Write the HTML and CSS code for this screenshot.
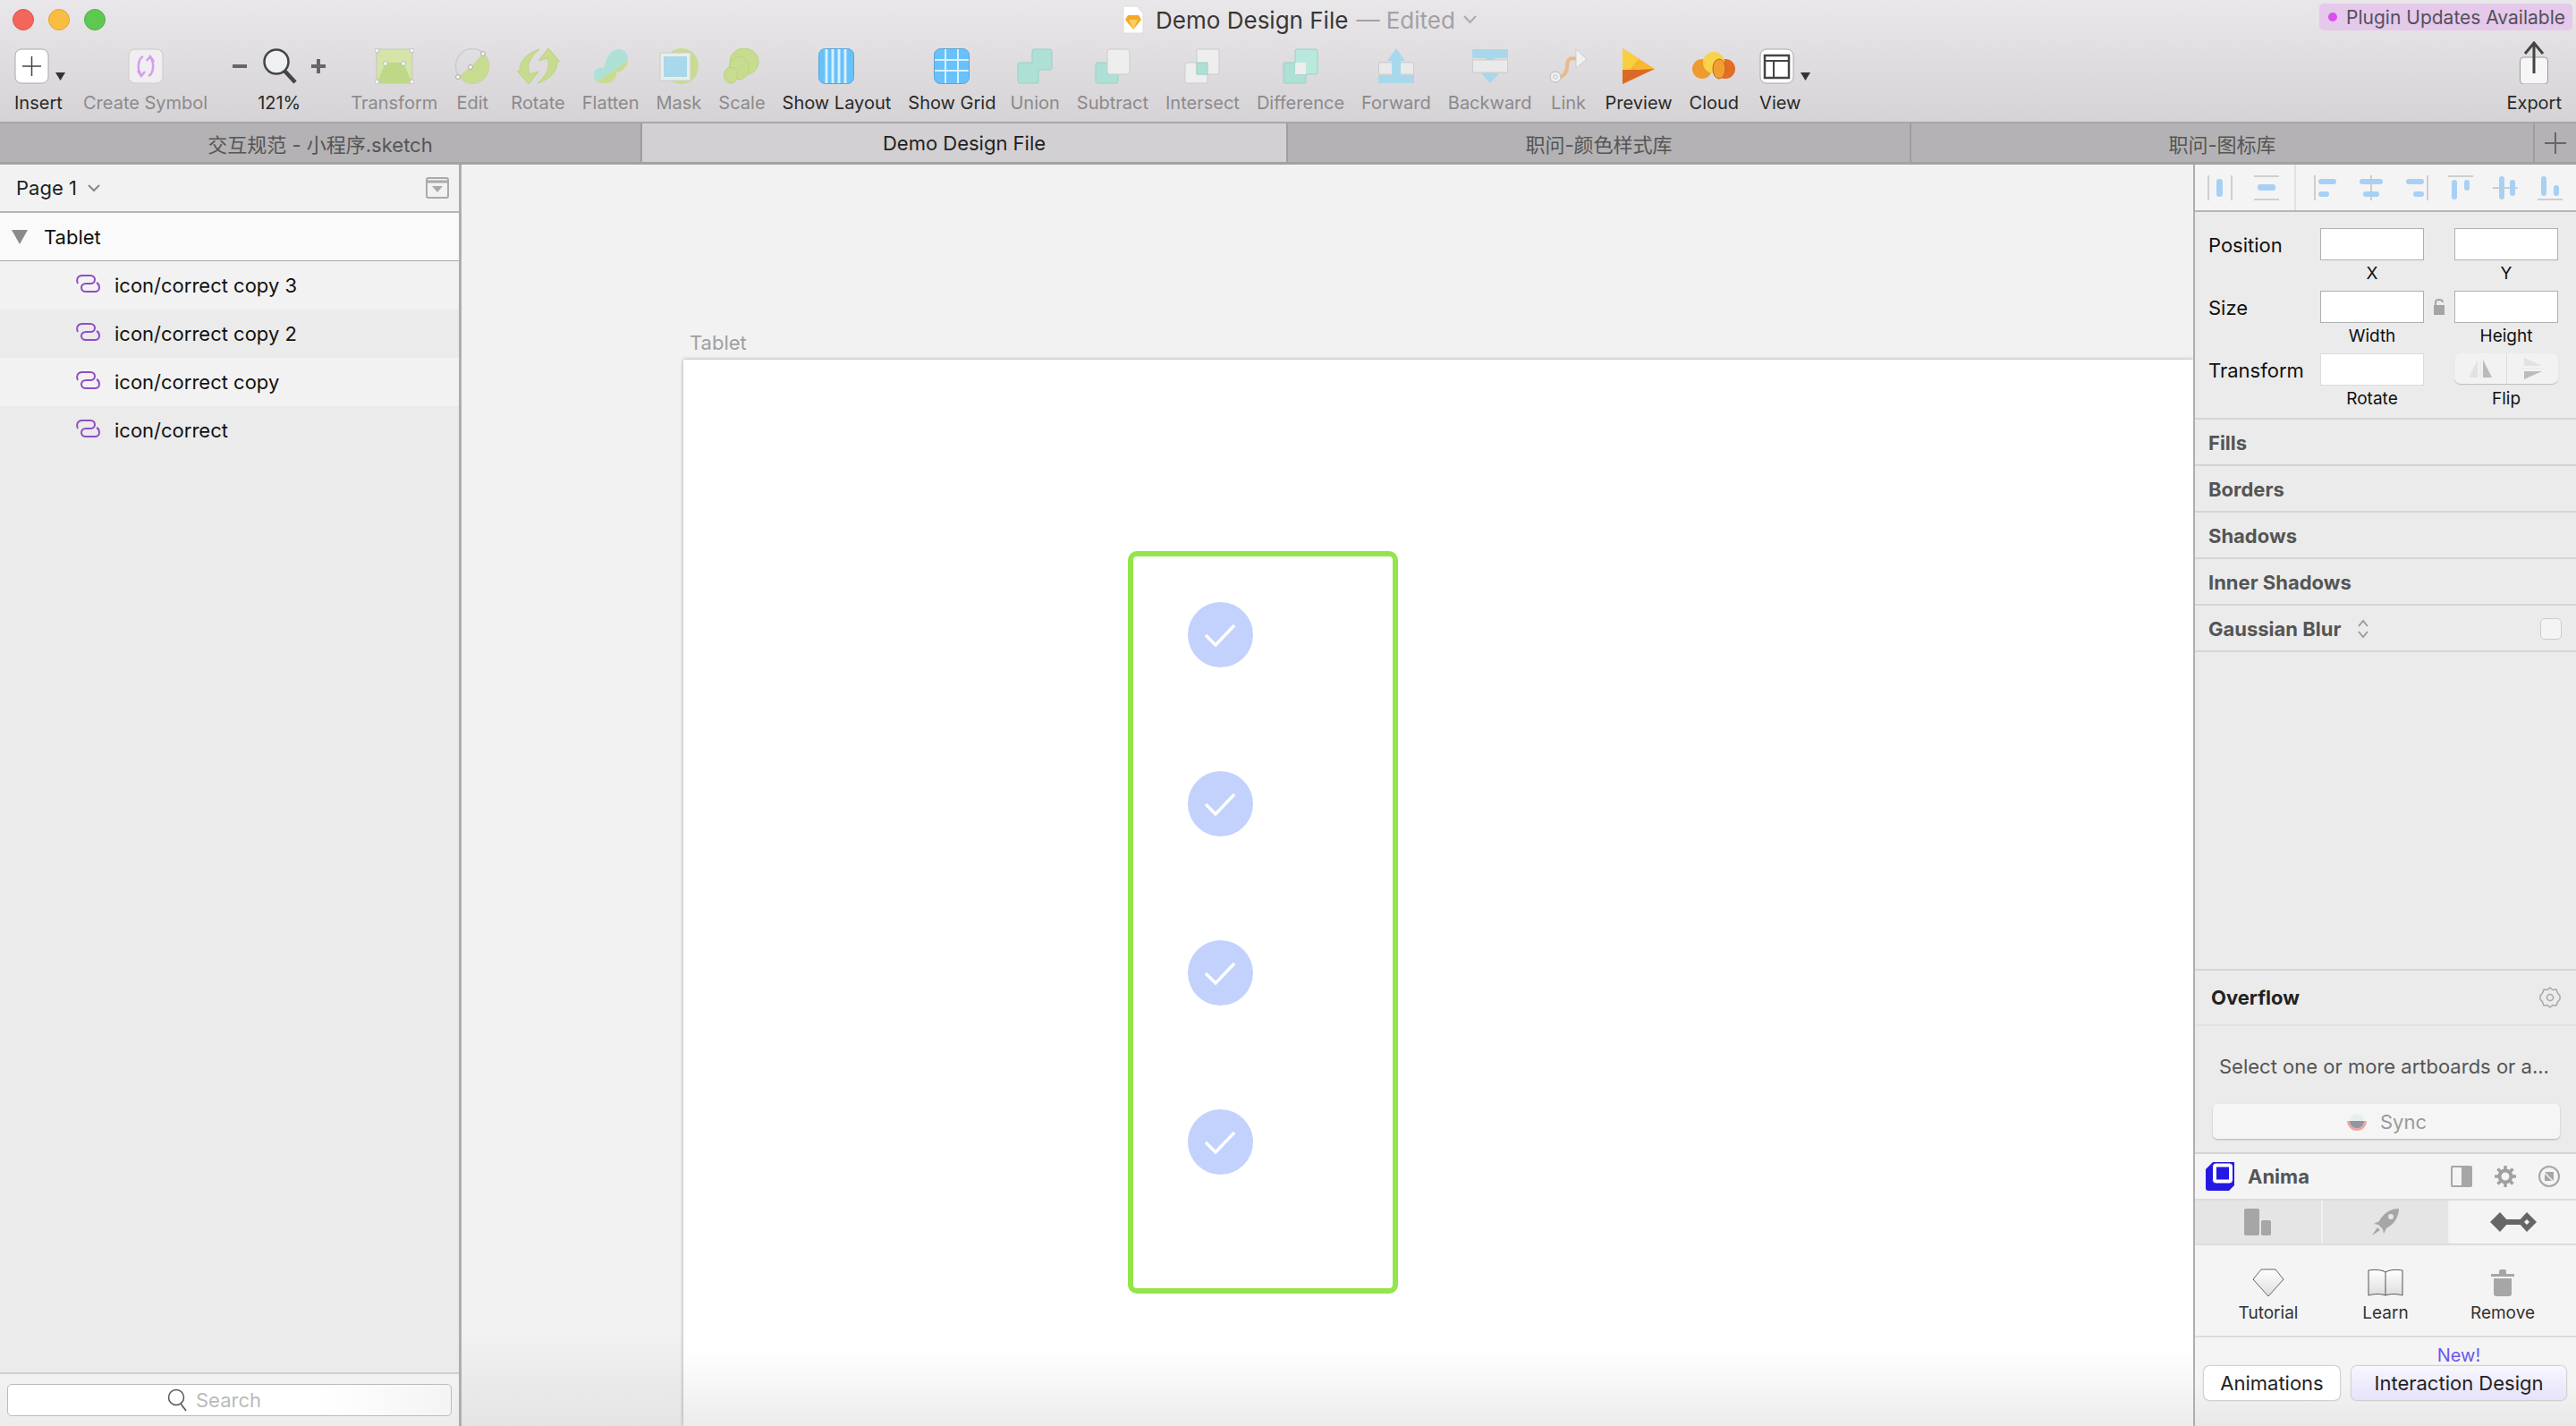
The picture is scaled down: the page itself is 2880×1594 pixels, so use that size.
FILE: index.html
```html
<!DOCTYPE html>
<html lang="zh-CN">
<head>
    <meta charset="UTF-8">
    <meta name="viewport" content="width=device-width, initial-scale=1.0">
    <title>Demo Design File</title>
    <link rel="stylesheet" href="styles.css">
</head>
<body>
    <svg class="defs" width="0" height="0">
        <symbol id="link" viewBox="0 0 28 20">
            <path d="M3 10C1 7 2 1 8 1H17C20 1 22 3 22 5.500S20 10 17 10H12" fill="none" stroke="#8e4ec6" stroke-width="2"/>
            <path d="M12 10C9 10 7 12 7 14.500S9 19 12 19H22C25 19 27 17 27 14.500C27 12 26 10 24 9" fill="none" stroke="#8e4ec6" stroke-width="2"/>
        </symbol>
        <symbol id="tick" viewBox="0 0 73 73">
            <circle cx="36.500" cy="36.500" r="36.500" fill="#c2d2fd"/>
            <path d="M20 37L31 48L52 26" fill="none" stroke="#fff" stroke-width="3.500"/>
        </symbol>
    </svg>

    <!-- barra de titulo -->
    <header class="toolbar">
        <div class="titlebar">
            <div class="lights">
                <span class="light red"></span>
                <span class="light yellow"></span>
                <span class="light green"></span>
            </div>
            <div class="doc-title">
                <svg width="24" height="32" viewBox="0 0 24 32"><path d="M1 1H16L23 9V31H1Z" fill="#fff" stroke="#ddd"/><path d="M6 11H18L21 16L12 27L3 16Z" fill="#f7a823"/><path d="M7 16H17L12 27Z" fill="#fbcd62"/></svg>
                <span class="doc-name">Demo Design File</span>
                <span class="doc-state">— Edited</span>
                <svg width="15" height="10" viewBox="0 0 15 10"><path d="M1 1L7.500 8L14 1" fill="none" stroke="#aaa" stroke-width="2"/></svg>
            </div>
            <div class="plugin-badge"><span class="plugin-dot"></span>Plugin Updates Available</div>
        </div>

        <div class="tools">
            <div class="tool tool-insert">
                <div class="tool-icon">
                    <svg width="58" height="40" viewBox="0 0 58 40"><rect x="1" y="1" width="37" height="38" rx="7" fill="#fff" stroke="#aaa"/><path d="M19.500 9V31M9 20H30" stroke="#444" stroke-width="1.500"/><path d="M46 27H57L51.500 36Z" fill="#333"/></svg>
                </div>
                <span class="tool-label">Insert</span>
            </div>
            <div class="tool off">
                <div class="tool-icon">
                    <svg width="40" height="40" viewBox="0 0 40 40"><rect x="1" y="1" width="38" height="38" rx="7" fill="#f0eef0" stroke="#ccc"/><path d="M17 9C11 12 10 24 15 30M11 25L15 31L19 26M23 31C29 28 30 16 25 10M29 15L25 9L21 14" fill="none" stroke="#d59cee" stroke-width="2.500"/></svg>
                </div>
                <span class="tool-label">Create Symbol</span>
            </div>
            <div class="tool tool-zoom">
                <div class="tool-icon">
                    <svg width="106" height="40" viewBox="0 0 106 40"><path d="M1 20H17" stroke="#666" stroke-width="4"/><circle cx="50" cy="15" r="13.500" fill="#eef0f4" stroke="#444" stroke-width="2.500"/><path d="M59 25L71 38" stroke="#444" stroke-width="4.500"/><path d="M89 20H105M97 12V28" stroke="#666" stroke-width="4"/></svg>
                </div>
                <span class="tool-label on">121%</span>
            </div>
            <div class="tool off tool-transform">
                <div class="tool-icon">
                    <svg width="44" height="40" viewBox="0 0 44 40"><rect x="2" y="1" width="40" height="38" fill="#d5e4a9" stroke="#c8c8b8"/><path d="M12 16H32L42 39H2Z" fill="#bfd888"/><g fill="#f4f4f4" stroke="#bbb"><circle cx="2.500" cy="2.500" r="2.500"/><circle cx="41.500" cy="2.500" r="2.500"/><circle cx="2.500" cy="37.500" r="2.500"/><circle cx="41.500" cy="37.500" r="2.500"/><circle cx="12" cy="17" r="2.500"/><circle cx="32" cy="17" r="2.500"/></g></svg>
                </div>
                <span class="tool-label">Transform</span>
            </div>
            <div class="tool off">
                <div class="tool-icon">
                    <svg width="40" height="40" viewBox="0 0 40 40"><ellipse cx="20" cy="20" rx="18.500" ry="19.500" fill="none" stroke="#ccc" stroke-width="1.500"/><path d="M32 6C37 10 39 15 39 20C39 32 30 39 20 39C14 39 10 37 4 32L18 21Z" fill="#c8dc90"/><g fill="#f4f4f4" stroke="#aaa"><circle cx="32" cy="6" r="2.500"/><circle cx="18" cy="21" r="2.500"/><circle cx="4" cy="32" r="2.500"/></g></svg>
                </div>
                <span class="tool-label">Edit</span>
            </div>
            <div class="tool off tool-rotate">
                <div class="tool-icon">
                    <svg width="48" height="40" viewBox="0 0 48 40"><path id="rotate-half" d="M25 1C12 5 2 14 3 27L0 25L13 40L24 26L14 29C10 20 14 10 25 1Z" fill="#c8dc90" stroke="#bcd27e"/><path d="M25 1C12 5 2 14 3 27L0 25L13 40L24 26L14 29C10 20 14 10 25 1Z" fill="#c8dc90" stroke="#bcd27e" transform="rotate(180 24 20)"/></svg>
                </div>
                <span class="tool-label">Rotate</span>
            </div>
            <div class="tool off">
                <div class="tool-icon">
                    <svg width="40" height="40" viewBox="0 0 40 40"><path d="M12 22C15 10 20 1 29 1C36 1 40 8 39 14L4 38C1 34 0 28 2 25C4 22 8 21 12 22Z" fill="#aee0d6"/><path d="M39 14C38 22 32 26 26 27C27 33 22 39 15 39C11 39 7 39 4 38Z" fill="#c8dc90"/></svg>
                </div>
                <span class="tool-label">Flatten</span>
            </div>
            <div class="tool off">
                <div class="tool-icon">
                    <svg width="44" height="40" viewBox="0 0 44 40"><ellipse cx="25" cy="20" rx="19" ry="20" fill="#c8dc90"/><rect x="1" y="5" width="34" height="31" fill="#e8efe8" stroke="#ccc"/><rect x="5" y="9" width="26" height="23" fill="#a8d8ec"/></svg>
                </div>
                <span class="tool-label">Mask</span>
            </div>
            <div class="tool off">
                <div class="tool-icon">
                    <svg width="40" height="40" viewBox="0 0 40 40"><g fill="#c8dc90" stroke="#bcd27e"><ellipse cx="23" cy="15" rx="16" ry="15"/><ellipse cx="17" cy="22" rx="11" ry="13"/><ellipse cx="8" cy="30" rx="7.500" ry="9"/></g></svg>
                </div>
                <span class="tool-label">Scale</span>
            </div>
            <div class="tool">
                <div class="tool-icon">
                    <svg width="40" height="40" viewBox="0 0 40 40"><rect x="0.500" y="0.500" width="39" height="39" rx="7" fill="#67c1fb" stroke="#5aa5d8"/><path d="M9 1V39M16 1V39M23 1V39M30 1V39" stroke="#d8f0ff" stroke-width="3"/></svg>
                </div>
                <span class="tool-label">Show Layout</span>
            </div>
            <div class="tool">
                <div class="tool-icon">
                    <svg width="40" height="40" viewBox="0 0 40 40"><rect x="0.500" y="0.500" width="39" height="39" rx="7" fill="#67c1fb" stroke="#5aa5d8"/><path d="M13 1V39M27 1V39M1 13H39M1 25H39" stroke="#d8f0ff" stroke-width="2"/></svg>
                </div>
                <span class="tool-label">Show Grid</span>
            </div>
            <div class="tool off tool-union">
                <div class="tool-icon">
                    <svg width="40" height="40" viewBox="0 0 40 40"><path d="M17 3Q17 1 19 1H37Q39 1 39 3V22Q39 24 37 24H24V37Q24 39 22 39H3Q1 39 1 37V18Q1 16 3 16H17Z" fill="#aee0d6" stroke="#9bd0c4"/></svg>
                </div>
                <span class="tool-label">Union</span>
            </div>
            <div class="tool off">
                <div class="tool-icon">
                    <svg width="40" height="40" viewBox="0 0 40 40"><rect x="1" y="16" width="25" height="23" rx="2" fill="#aee0d6" stroke="#9bd0c4"/><rect x="14" y="1" width="25" height="28" rx="3" fill="#eeeeee" stroke="#ccc"/></svg>
                </div>
                <span class="tool-label">Subtract</span>
            </div>
            <div class="tool off">
                <div class="tool-icon">
                    <svg width="40" height="40" viewBox="0 0 40 40"><rect x="1" y="16" width="25" height="23" rx="2" fill="#eee" stroke="#ccc"/><rect x="14" y="1" width="25" height="28" rx="2" fill="#eee" stroke="#ccc"/><rect x="14" y="16" width="12" height="13" fill="#aee0d6" stroke="#9bd0c4"/></svg>
                </div>
                <span class="tool-label">Intersect</span>
            </div>
            <div class="tool off">
                <div class="tool-icon">
                    <svg width="40" height="40" viewBox="0 0 40 40"><rect x="1" y="16" width="25" height="23" rx="2" fill="#aee0d6" stroke="#9bd0c4"/><rect x="14" y="1" width="25" height="28" rx="2" fill="#b9e9dc" stroke="#9bd0c4"/><rect x="14" y="16" width="12" height="13" fill="#eee"/></svg>
                </div>
                <span class="tool-label">Difference</span>
            </div>
            <div class="tool off">
                <div class="tool-icon">
                    <svg width="40" height="40" viewBox="0 0 40 40"><path d="M20 0L30 14H25V30H40V39H0V30H15V14H10Z" fill="#a8d8ec"/><rect x="0.500" y="16" width="39" height="13" fill="#eaeaea" stroke="#ccc"/><rect x="15" y="14" width="10" height="16" fill="#a8d8ec"/></svg>
                </div>
                <span class="tool-label">Forward</span>
            </div>
            <div class="tool off">
                <div class="tool-icon">
                    <svg width="40" height="40" viewBox="0 0 40 40"><path d="M0 1H40V11H25V28H30L20 39L10 28H15V11H0Z" fill="#a8d8ec"/><rect x="0.500" y="13" width="39" height="14" fill="#eaeaea" stroke="#ccc"/></svg>
                </div>
                <span class="tool-label">Backward</span>
            </div>
            <div class="tool off">
                <div class="tool-icon">
                    <svg width="44" height="40" viewBox="0 0 44 40"><path d="M8 33C16 32 20 28 20 20C20 12 24 10 30 12" fill="none" stroke="#eab98c" stroke-width="4"/><path d="M30 1L42 12L30 22Z" fill="#f2f2f2" stroke="#ccc"/><circle cx="7" cy="32" r="6" fill="#eee" stroke="#bbb"/><circle cx="7" cy="32" r="2" fill="#fff" stroke="#bbb"/></svg>
                </div>
                <span class="tool-label">Link</span>
            </div>
            <div class="tool">
                <div class="tool-icon">
                    <svg width="36" height="40" viewBox="0 0 36 40"><path d="M0 0L36 23L0 40Z" fill="#f7b733"/><path d="M0 0L18 12L8 24H0Z" fill="#f8cf3f"/><path d="M0 24H18L36 23L0 40Z" fill="#dc6a26"/></svg>
                </div>
                <span class="tool-label">Preview</span>
            </div>
            <div class="tool">
                <div class="tool-icon">
                    <svg width="50" height="40" viewBox="0 0 50 40"><circle cx="12" cy="23" r="11" fill="#ed9a2e"/><circle cx="38" cy="23" r="11" fill="#e36d24"/><circle cx="25" cy="16" r="12" fill="#f8d24a"/><ellipse cx="31" cy="23" rx="7" ry="11" fill="#f0a030" stroke="#c86020"/></svg>
                </div>
                <span class="tool-label">Cloud</span>
            </div>
            <div class="tool tool-view">
                <div class="tool-icon">
                    <svg width="58" height="40" viewBox="0 0 58 40"><rect x="1" y="1" width="37" height="38" rx="7" fill="#fff" stroke="#aaa"/><rect x="6" y="8" width="27" height="25" fill="none" stroke="#444" stroke-width="2.500"/><path d="M6 14H33M16 14V33" stroke="#444" stroke-width="2"/><path d="M46 27H57L51.500 36Z" fill="#333"/></svg>
                </div>
                <span class="tool-label">View</span>
            </div>
            <div class="tool tool-export">
                <div class="tool-icon">
                    <svg width="34" height="48" viewBox="0 0 34 48"><rect x="1.500" y="18" width="31" height="30" rx="4" fill="#f6f6f6" stroke="#999"/><path d="M17 2V36M7 14L17 2L27 14" fill="none" stroke="#444" stroke-width="3"/></svg>
                </div>
                <span class="tool-label">Export</span>
            </div>
        </div>
    </header>

    <!-- abas -->
    <nav class="tabs">
        <div class="tab tab-doc">交互规范 - 小程序.sketch</div>
        <div class="tab tab-active">Demo Design File</div>
        <div class="tab tab-color">职问-颜色样式库</div>
        <div class="tab tab-icons">职问-图标库</div>
        <div class="tab tab-add">
            <svg width="24" height="24" viewBox="0 0 24 24"><path d="M12 0V24M0 12H24" stroke="#666" stroke-width="2"/></svg>
        </div>
    </nav>

    <main class="workspace">
        <!-- lista de camadas -->
        <aside class="layers">
            <div class="page-bar">
                <span class="page-name">Page 1</span>
                <svg width="14" height="9" viewBox="0 0 14 9"><path d="M1 1L7 7L13 1" fill="none" stroke="#888" stroke-width="2"/></svg>
                <svg class="page-toggle" width="26" height="24" viewBox="0 0 26 24"><rect x="1" y="1" width="24" height="22" rx="2" fill="none" stroke="#aaa" stroke-width="2"/><path d="M1 5H25" stroke="#aaa" stroke-width="3"/><path d="M7 10H19L13 17Z" fill="#aaa"/></svg>
            </div>
            <div class="artboard-row">
                <svg width="18" height="16" viewBox="0 0 18 16"><path d="M0 0H18L9 16Z" fill="#8b8b8b"/></svg>
                <span>Tablet</span>
            </div>
            <div class="layer-row"><svg class="layer-icon"><use href="#link"/></svg>icon/correct copy 3</div>
            <div class="layer-row alt"><svg class="layer-icon"><use href="#link"/></svg>icon/correct copy 2</div>
            <div class="layer-row"><svg class="layer-icon"><use href="#link"/></svg>icon/correct copy</div>
            <div class="layer-row alt"><svg class="layer-icon"><use href="#link"/></svg>icon/correct</div>
            <div class="layers-fill"></div>
            <div class="search-bar">
                <div class="search-box">
                    <svg width="22" height="26" viewBox="0 0 22 26"><circle cx="10" cy="10" r="8.500" fill="none" stroke="#555" stroke-width="1.500"/><path d="M15 17L21 25" stroke="#555" stroke-width="1.500"/></svg>
                    <span>Search</span>
                </div>
            </div>
        </aside>

        <!-- area de desenho -->
        <section class="canvas">
            <div class="board-title">Tablet</div>
            <div class="board">
                <div class="frame">
                    <svg class="tick"><use href="#tick"/></svg>
                    <svg class="tick"><use href="#tick"/></svg>
                    <svg class="tick"><use href="#tick"/></svg>
                    <svg class="tick"><use href="#tick"/></svg>
                </div>
            </div>
        </section>

        <!-- inspetor -->
        <aside class="inspector">
            <div class="align-bar">
                <div class="align-group first">
                    <svg width="28" height="28" viewBox="0 0 28 28"><path d="M1 0V28M27 0V28" stroke="#c2c2c2" stroke-width="1.500"/><rect x="10" y="4" width="7" height="20" rx="3" fill="#a8d0f5"/></svg>
                    <svg width="28" height="28" viewBox="0 0 28 28"><path d="M0 1H28M0 27H28" stroke="#c2c2c2" stroke-width="1.500"/><rect x="4" y="10" width="20" height="7" rx="3" fill="#a8d0f5"/></svg>
                </div>
                <div class="align-group">
                    <svg width="28" height="28" viewBox="0 0 28 28"><path d="M1 0V28" stroke="#c2c2c2" stroke-width="1.500"/><rect x="5" y="4" width="20" height="6" rx="3" fill="#a8d0f5"/><rect x="5" y="18" width="12" height="6" rx="3" fill="#a8d0f5"/></svg>
                    <svg width="28" height="28" viewBox="0 0 28 28"><path d="M14 0V28" stroke="#c2c2c2" stroke-width="1.500"/><rect x="1" y="4" width="26" height="6" rx="3" fill="#a8d0f5"/><rect x="5" y="18" width="18" height="6" rx="3" fill="#a8d0f5"/></svg>
                    <svg width="28" height="28" viewBox="0 0 28 28"><path d="M27 0V28" stroke="#c2c2c2" stroke-width="1.500"/><rect x="3" y="4" width="20" height="6" rx="3" fill="#a8d0f5"/><rect x="11" y="18" width="12" height="6" rx="3" fill="#a8d0f5"/></svg>
                    <svg width="28" height="28" viewBox="0 0 28 28"><path d="M0 1H28" stroke="#c2c2c2" stroke-width="1.500"/><rect x="4" y="5" width="6" height="22" rx="3" fill="#a8d0f5"/><rect x="18" y="5" width="6" height="12" rx="3" fill="#a8d0f5"/></svg>
                    <svg width="28" height="28" viewBox="0 0 28 28"><path d="M0 14H28" stroke="#c2c2c2" stroke-width="1.500"/><rect x="7" y="1" width="6" height="26" rx="3" fill="#a8d0f5"/><rect x="19" y="5" width="6" height="18" rx="3" fill="#a8d0f5"/></svg>
                    <svg width="28" height="28" viewBox="0 0 28 28"><path d="M0 27H28" stroke="#c2c2c2" stroke-width="1.500"/><rect x="4" y="1" width="6" height="22" rx="3" fill="#a8d0f5"/><rect x="18" y="11" width="6" height="12" rx="3" fill="#a8d0f5"/></svg>
                </div>
            </div>

            <div class="geometry">
                <div class="geo-row">
                    <span class="geo-name">Position</span>
                    <div class="geo-field"><div class="geo-input"></div><span class="geo-cap">X</span></div>
                    <span class="geo-lock"></span>
                    <div class="geo-field"><div class="geo-input"></div><span class="geo-cap">Y</span></div>
                </div>
                <div class="geo-row">
                    <span class="geo-name">Size</span>
                    <div class="geo-field"><div class="geo-input"></div><span class="geo-cap">Width</span></div>
                    <span class="geo-lock">
                        <svg width="14" height="18" viewBox="0 0 14 18"><rect x="1" y="7" width="12" height="11" fill="#a4a4a4"/><path d="M3 7V4C3 2 5 1 7 1S11 2 11 4" fill="none" stroke="#a4a4a4" stroke-width="2"/></svg>
                    </span>
                    <div class="geo-field"><div class="geo-input"></div><span class="geo-cap">Height</span></div>
                </div>
                <div class="geo-row">
                    <span class="geo-name">Transform</span>
                    <div class="geo-field"><div class="geo-input faint"></div><span class="geo-cap">Rotate</span></div>
                    <span class="geo-lock"></span>
                    <div class="geo-field">
                        <div class="flip">
                            <div class="flip-half"><svg width="28" height="22" viewBox="0 0 28 22"><path d="M11 1V21H1Z" fill="#e2e2e2"/><path d="M14 0V22" stroke="#e8e8e8"/><path d="M17 1L27 21H17Z" fill="#bbb"/></svg></div>
                            <div class="flip-half"><svg width="26" height="26" viewBox="0 0 26 26"><path d="M4 1L24 10H4Z" fill="#e2e2e2"/><path d="M0 13H26" stroke="#e8e8e8"/><path d="M4 16H24L4 25Z" fill="#bbb"/></svg></div>
                        </div>
                        <span class="geo-cap flip-cap">Flip</span>
                    </div>
                </div>
            </div>

            <div class="section">Fills</div>
            <div class="section">Borders</div>
            <div class="section">Shadows</div>
            <div class="section">Inner Shadows</div>
            <div class="section">
                <span>Gaussian Blur</span>
                <svg class="blur-arrows" width="14" height="22" viewBox="0 0 14 22"><path d="M2 8L7 2L12 8M2 14L7 20L12 14" fill="none" stroke="#999" stroke-width="1.800"/></svg>
                <span class="blur-check"></span>
            </div>
            <div class="inspector-fill"></div>

            <div class="overflow-head">
                <span>Overflow</span>
                <svg width="24" height="24" viewBox="0 0 24 24"><path d="M12 1L15 3.500L19 3L20.500 7L23 10L23 14L20.500 17L19 21L15 20.500L12 23L9 20.500L5 21L3.500 17L1 14V10L3.500 7L5 3L9 3.500Z" fill="none" stroke="#a8a8a8" stroke-width="1.500"/><circle cx="12" cy="12" r="3.500" fill="none" stroke="#a8a8a8" stroke-width="1.500"/></svg>
            </div>
            <div class="overflow-body">
                <p class="overflow-text">Select one or more artboards or a...</p>
                <div class="sync-btn">
                    <svg width="24" height="20" viewBox="0 0 24 20"><path d="M1 9H23A11 11 0 0 1 1 9Z" fill="#eea8a0"/><path d="M4 9H20A8 8 0 0 1 4 9Z" fill="#8f98a2"/><path d="M4 9A8 8 0 0 1 20 9Z" fill="#e8eeee"/></svg>
                    <span>Sync</span>
                </div>
            </div>

            <div class="anima-head">
                <svg width="32" height="32" viewBox="0 0 32 32"><path d="M8 0H32V26L26 32H3Q0 32 0 29V8Z" fill="#2419e2"/><rect x="7.500" y="1" width="23" height="23" rx="4" fill="#fff" stroke="#2419e2"/><rect x="12" y="5.500" width="14" height="14" fill="#2419e2"/></svg>
                <span class="anima-name">Anima</span>
                <svg class="anima-panel" width="24" height="24" viewBox="0 0 24 24"><rect x="1" y="1" width="22" height="22" rx="1" fill="none" stroke="#a6a6a6" stroke-width="2"/><rect x="12" y="1" width="11" height="22" fill="#a6a6a6"/></svg>
                <svg width="24" height="24" viewBox="0 0 24 24"><circle cx="12" cy="12" r="6.500" fill="none" stroke="#a0a0a0" stroke-width="4"/><path d="M12 0V5M12 19V24M0 12H5M19 12H24M3.500 3.500L7 7M17 17L20.500 20.500M3.500 20.500L7 17M17 7L20.500 3.500" stroke="#a0a0a0" stroke-width="3.500"/></svg>
                <svg width="24" height="24" viewBox="0 0 24 24"><circle cx="12" cy="12" r="11" fill="none" stroke="#a6a6a6" stroke-width="2"/><path d="M7 7H17V17Z" fill="#a6a6a6"/><path d="M7 9L15 17H7Z" fill="#a6a6a6"/></svg>
            </div>
            <div class="anima-tabs">
                <div class="anima-tab">
                    <svg width="30" height="30" viewBox="0 0 30 30"><rect x="0" y="0" width="17" height="30" rx="2" fill="#a6a6a6"/><rect x="19" y="13" width="11" height="17" rx="2" fill="#a6a6a6"/></svg>
                </div>
                <div class="anima-tab">
                    <svg width="30" height="30" viewBox="0 0 30 30"><path d="M30 0C20 0 12 6 8 14L2 17L7 18L12 23L13 28L16 22C24 18 30 10 30 0Z" fill="#a6a6a6"/><path d="M6 21L9 24L0 30Z" fill="#a6a6a6"/><circle cx="21" cy="9" r="3" fill="#e5e5e5"/></svg>
                </div>
                <div class="anima-tab active">
                    <svg width="54" height="24" viewBox="0 0 54 24"><path d="M12 1L22 12L12 23L1 12Z" fill="#666"/><path d="M42 1L53 12L42 23L32 12Z" fill="#666"/><rect x="18" y="9" width="18" height="6" fill="#666"/><path d="M42 9L45 12L42 15L39 12Z" fill="#f4f4f4"/></svg>
                </div>
            </div>
            <div class="anima-actions">
                <div class="anima-action">
                    <svg width="36" height="32" viewBox="0 0 36 32"><defs><linearGradient id="soft" x1="0" y1="0" x2="0" y2="1"><stop offset="0" stop-color="#fff"/><stop offset="1" stop-color="#ddd"/></linearGradient></defs><path d="M10 1H26L35 12L18 31L1 12Z" fill="url(#soft)" stroke="#666"/></svg>
                    <span>Tutorial</span>
                </div>
                <div class="anima-action">
                    <svg width="40" height="32" viewBox="0 0 40 32"><path d="M1 2C8 1 15 1 20 4C25 1 32 1 39 2V30C32 28 25 28 20 30C15 28 8 28 1 30Z" fill="url(#soft)" stroke="#555"/><path d="M20 4V30" stroke="#555"/></svg>
                    <span>Learn</span>
                </div>
                <div class="anima-action">
                    <svg width="28" height="32" viewBox="0 0 28 32"><path d="M1 6H27V9H1Z" fill="#a6a6a6"/><path d="M10 6V3Q10 1 12 1H16Q18 1 18 3V6Z" fill="#a6a6a6"/><path d="M4 11H24V28Q24 31 21 31H7Q4 31 4 28Z" fill="#a6a6a6"/></svg>
                    <span>Remove</span>
                </div>
            </div>
            <div class="anima-foot">
                <div class="new-tag">New!</div>
                <div class="foot-btns">
                    <div class="foot-btn">Animations</div>
                    <div class="foot-btn wide">Interaction Design</div>
                </div>
            </div>
        </aside>
    </main>
</body>
</html>
```

FILE: styles.css
```css
/* Geral */
* {
    box-sizing: border-box;
}

html, body {
    height: 100%;
}

body {
    margin: 0;
    display: flex;
    flex-direction: column;
    height: 1594px;
    overflow: hidden;
    font-family: Inter, "Noto Sans CJK SC", sans-serif;
    font-size: 22px;
    color: #222;
    background-color: #f2f2f2;
}

svg {
    display: block;
    flex: none;
}

.defs {
    position: absolute;
}

/* Barra de titulo */
.toolbar {
    height: 138px;
    flex: none;
    background: linear-gradient(#e9e7e9, #d5d3d5);
    border-bottom: 2px solid #a8a6a8;
}

.titlebar {
    position: relative;
    display: flex;
    justify-content: center;
    height: 44px;
}

.lights {
    position: absolute;
    left: 14px;
    top: 10px;
    display: flex;
    gap: 16px;
}

.light {
    width: 24px;
    height: 24px;
    border-radius: 50%;
}

.red { background-color: #f3665c; border: 1px solid #e0544a; }
.yellow { background-color: #f9bd42; border: 1px solid #e3a530; }
.green { background-color: #5fc853; border: 1px solid #4db143; }

.doc-title {
    display: flex;
    align-items: center;
    gap: 9px;
    margin-left: 26px;
    font-size: 26px;
    height: 44px;
}

.doc-name {
    color: #3a3638;
    margin-left: 4px;
}

.doc-state {
    color: #a3a1a3;
}

.plugin-badge {
    position: absolute;
    right: 4px;
    top: 4px;
    display: flex;
    align-items: center;
    gap: 10px;
    height: 30px;
    padding: 0 8px 0 10px;
    border-radius: 5px;
    background-color: #e4c9ea;
    color: #55505a;
    font-size: 21px;
}

.plugin-dot {
    width: 10px;
    height: 10px;
    border-radius: 50%;
    background-color: #d94ff0;
}

.tools {
    display: flex;
    align-items: flex-start;
    gap: 19px;
    padding: 10px 16px 0;
}

.tool {
    display: flex;
    flex-direction: column;
    align-items: center;
}

.tool-icon {
    height: 40px;
    display: flex;
    align-items: flex-end;
}

.tool-label {
    margin-top: 9px;
    font-size: 20px;
    line-height: 24px;
    white-space: nowrap;
    color: #2a2a2a;
}

.off .tool-label {
    color: #8c8a8c;
}

.tool-insert {
    width: 58px;
    align-items: flex-start;
}

.tool-zoom {
    margin-left: 8px;
}

.tool-transform {
    margin-left: 8px;
}

.tool-rotate {
    margin-left: 4px;
}

.tool-union {
    margin-left: -3px;
}

.tool-view {
    margin-left: 4px;
    align-items: flex-start;
}

.tool-export {
    margin-left: auto;
}

/* Abas */
.tabs {
    display: flex;
    height: 46px;
    flex: none;
    background-color: #b4b2b4;
    border-bottom: 3px solid #a3a1a3;
    color: #555;
}

.tab {
    display: flex;
    align-items: center;
    justify-content: center;
    border-right: 2px solid #9f9d9f;
    font-size: 22px;
}

.tab-doc { width: 718px; }
.tab-active { width: 722px; background-color: #d2d0d2; color: #222; }
.tab-color { width: 697px; }
.tab-icons { width: 697px; }
.tab-add { flex: 1; border-right: none; }

/* Camadas */
.workspace {
    display: flex;
    flex: 1;
    min-height: 0;
}

.layers {
    width: 516px;
    flex: none;
    display: flex;
    flex-direction: column;
    background-color: #ebebeb;
    border-right: 3px solid #aeaeae;
}

.page-bar {
    display: flex;
    align-items: center;
    gap: 12px;
    height: 54px;
    flex: none;
    padding: 0 11px 0 18px;
    background-color: #f2f2f2;
    border-bottom: 2px solid #b5b5b5;
}

.page-toggle {
    margin-left: auto;
}

.artboard-row {
    display: flex;
    align-items: center;
    gap: 18px;
    height: 54px;
    flex: none;
    padding-left: 13px;
    background-color: #fafafa;
    border-bottom: 1px solid #aaa;
    color: #111;
}

.layer-row {
    display: flex;
    align-items: center;
    gap: 16px;
    height: 54px;
    flex: none;
    padding-left: 84px;
    background-color: #f2f2f2;
    color: #111;
}

.layer-row.alt {
    background-color: #ebebeb;
}

.layer-icon {
    width: 28px;
    height: 20px;
    margin-top: -4px;
}

.layers-fill {
    flex: 1;
}

.search-bar {
    height: 60px;
    flex: none;
    padding: 11px 8px 0;
    background: linear-gradient(#f2f2f2, #ececec);
    border-top: 2px solid #d0d0d0;
}

.search-box {
    display: flex;
    align-items: center;
    justify-content: center;
    gap: 10px;
    height: 36px;
    padding-right: 34px;
    background: linear-gradient(90deg, #fff 70%, #f4f4f4);
    border: 1px solid #bbb;
    border-radius: 5px;
    color: #bbb;
}

/* Area de desenho */
.canvas {
    flex: 1;
    min-width: 0;
    padding: 182px 0 0 248px;
    background: linear-gradient(#f2f2f2 1300px, #e4e4e4);
    display: flex;
    flex-direction: column;
}

.board-title {
    height: 36px;
    padding-left: 7px;
    color: #a0a0a0;
    line-height: 34px;
}

.board {
    flex: 1;
    padding: 214px 0 0 497px;
    background: linear-gradient(#fff 1105px, #ececec);
    box-shadow: 0 0 4px rgba(0, 0, 0, 0.35);
}

.frame {
    display: flex;
    flex-direction: column;
    gap: 116px;
    width: 302px;
    height: 830px;
    padding: 51px 0 0 61px;
    border: 6px solid #92e649;
    border-radius: 10px;
}

.tick {
    width: 73px;
    height: 73px;
}

/* Inspetor */
.inspector {
    width: 428px;
    flex: none;
    display: flex;
    flex-direction: column;
    background-color: #ebebeb;
    border-left: 2px solid #aeaeae;
}

.align-bar {
    display: flex;
    height: 53px;
    flex: none;
    background-color: #f4f4f4;
    border-bottom: 2px solid #b5b5b5;
}

.align-group {
    display: flex;
    align-items: center;
    gap: 22px;
    padding: 0 14px 0 20px;
}

.align-group.first {
    width: 113px;
    gap: 24px;
    padding-left: 14px;
    border-right: 2px solid #e2e2e2;
}

.geometry {
    display: flex;
    flex-direction: column;
    gap: 34px;
    height: 232px;
    flex: none;
    padding: 18px 0 0 15px;
    border-bottom: 2px solid #d4d4d4;
}

.geo-row {
    display: flex;
    height: 36px;
}

.geo-name {
    width: 125px;
    padding-top: 1px;
    line-height: 36px;
    color: #111;
}

.geo-field {
    position: relative;
    width: 116px;
}

.geo-lock {
    display: flex;
    justify-content: center;
    align-items: center;
    width: 34px;
}

.geo-input {
    height: 36px;
    background-color: #fff;
    border: 1px solid #b0b0b0;
}

.geo-input.faint {
    border-color: #dcdcdc;
}

.geo-cap {
    display: block;
    margin-top: 3px;
    text-align: center;
    font-size: 19px;
    line-height: 24px;
    color: #111;
}

.flip-cap {
    margin-top: 5px;
}

.flip {
    display: flex;
    height: 34px;
    background-color: #f2f2f2;
    border-radius: 7px;
    box-shadow: 0 1px 1px rgba(0, 0, 0, 0.2);
}

.flip-half {
    flex: 1;
    display: flex;
    align-items: center;
    justify-content: center;
}

.flip-half + .flip-half {
    border-left: 1px solid #dcdcdc;
}

.section {
    display: flex;
    align-items: center;
    height: 52px;
    flex: none;
    padding: 2px 15px 0;
    font-weight: 700;
    color: #555;
    border-bottom: 2px solid #d4d4d4;
}

.blur-arrows {
    margin-left: 18px;
}

.blur-check {
    width: 24px;
    height: 24px;
    margin-left: auto;
    margin-right: 1px;
    background-color: #f4f4f4;
    border: 1px solid #ccc;
    border-radius: 5px;
}

.inspector-fill {
    flex: 1;
}

.overflow-head {
    display: flex;
    align-items: center;
    justify-content: space-between;
    height: 64px;
    flex: none;
    padding: 0 17px 0 18px;
    font-weight: 700;
    color: #222;
    border-top: 2px solid #d4d4d4;
    border-bottom: 2px solid #e2e2e2;
}

.overflow-body {
    height: 143px;
    flex: none;
    padding-top: 27px;
    border-bottom: 2px solid #d4d4d4;
}

.overflow-text {
    margin: 0 0 0 27px;
    line-height: 36px;
    color: #555;
    white-space: nowrap;
}

.sync-btn {
    display: flex;
    align-items: center;
    justify-content: center;
    gap: 14px;
    height: 39px;
    margin: 24px 18px 0 20px;
    background-color: #f5f5f5;
    border-radius: 5px;
    box-shadow: 0 1px 2px rgba(0, 0, 0, 0.25);
    color: #9a9a9a;
}

.anima-head {
    display: flex;
    align-items: center;
    gap: 25px;
    height: 52px;
    flex: none;
    padding: 0 18px 0 12px;
    background-color: #f4f4f4;
    border-bottom: 2px solid #dcdcdc;
}

.anima-name {
    margin-left: -10px;
    margin-right: auto;
    font-weight: 700;
    color: #555;
}

.anima-tabs {
    display: flex;
    height: 50px;
    flex: none;
    border-bottom: 2px solid #dcdcdc;
}

.anima-tab {
    flex: 1;
    display: flex;
    align-items: center;
    justify-content: center;
    background-color: #e5e5e5;
    border-right: 2px solid #f0f0f0;
}

.anima-tab.active {
    background-color: #f4f4f4;
    border-right: none;
}

.anima-actions {
    display: flex;
    justify-content: center;
    gap: 31px;
    height: 103px;
    flex: none;
    padding: 26px 0 0;
    background-color: #f4f4f4;
    border-bottom: 2px solid #dcdcdc;
}

.anima-action {
    display: flex;
    flex-direction: column;
    align-items: center;
    gap: 6px;
    width: 100px;
    font-size: 19px;
    color: #333;
}

.anima-foot {
    height: 99px;
    flex: none;
    padding: 8px 8px 0 10px;
    background: linear-gradient(#f4f4f4 50%, #e8e8e8);
}

.new-tag {
    width: 240px;
    margin-left: 165px;
    text-align: center;
    font-size: 20px;
    line-height: 24px;
    color: #6b57f0;
}

.foot-btns {
    display: flex;
    gap: 13px;
}

.foot-btn {
    display: flex;
    align-items: center;
    justify-content: center;
    width: 152px;
    height: 38px;
    background-color: #fff;
    border-radius: 6px;
    box-shadow: 0 0 2px rgba(0, 0, 0, 0.5);
    color: #222;
}

.foot-btn.wide {
    width: 240px;
    background: linear-gradient(#f8f7fe, #e6e2fa);
}
```
